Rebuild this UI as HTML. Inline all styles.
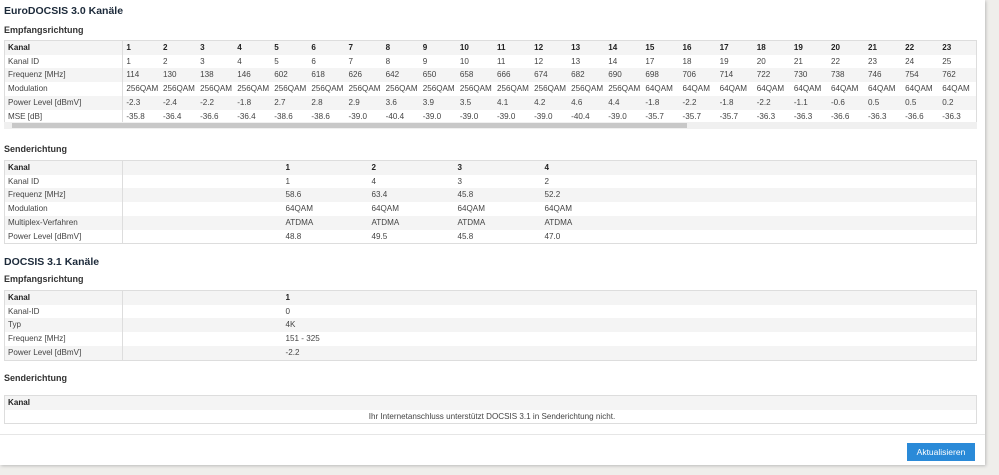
<!DOCTYPE html><html><head><style>
body{margin:0;width:999px;height:475px;background:#efeeeb;font-family:"Liberation Sans",sans-serif;overflow:hidden;position:relative}
.panel{position:absolute;left:0;top:0;width:985px;height:465px;background:#fff;box-shadow:1px 1px 3px #bbb}
h1{position:absolute;left:4px;top:5px;margin:0;font-size:10.5px;font-weight:bold;color:#1c2a3a}
h2{position:absolute;left:4px;margin:0;font-size:9px;font-weight:bold;color:#333}
table{position:absolute;left:4px;width:973px;border-collapse:collapse;border:1px solid #ddd;font-size:8.1px;color:#444;table-layout:fixed}
td{height:13.7px;padding:0 0 0 3px;white-space:nowrap;overflow:hidden;line-height:13.7px}
tr:nth-child(odd) td{background:#f4f4f4}
tr:first-child td{font-weight:bold;color:#222}
td.l{border-right:1px solid #ddd}
.sb{position:absolute;left:4px;top:122px;width:973px;height:7px;background:#f0f0f0}
.sb div{position:absolute;left:8px;top:1px;width:675px;height:5px;background:#c8c8c8}
.foot{position:absolute;left:0;top:434px;width:985px;border-top:1px solid #e6e6e6}
.btn{position:absolute;left:907px;top:443px;width:68px;height:18px;background:#2a8ad8;color:#fff;font-size:8.5px;text-align:center;line-height:18px}
</style></head><body><div class="panel">
<h1>EuroDOCSIS 3.0 Kanäle</h1>
<h2 style="top:25px">Empfangsrichtung</h2>
<table style="top:40px"><colgroup><col style="width:118px"><col span="23" style="width:37px"></colgroup>
<tr><td class="l">Kanal</td><td>1</td><td>2</td><td>3</td><td>4</td><td>5</td><td>6</td><td>7</td><td>8</td><td>9</td><td>10</td><td>11</td><td>12</td><td>13</td><td>14</td><td>15</td><td>16</td><td>17</td><td>18</td><td>19</td><td>20</td><td>21</td><td>22</td><td>23</td></tr>
<tr><td class="l">Kanal ID</td><td>1</td><td>2</td><td>3</td><td>4</td><td>5</td><td>6</td><td>7</td><td>8</td><td>9</td><td>10</td><td>11</td><td>12</td><td>13</td><td>14</td><td>17</td><td>18</td><td>19</td><td>20</td><td>21</td><td>22</td><td>23</td><td>24</td><td>25</td></tr>
<tr><td class="l">Frequenz [MHz]</td><td>114</td><td>130</td><td>138</td><td>146</td><td>602</td><td>618</td><td>626</td><td>642</td><td>650</td><td>658</td><td>666</td><td>674</td><td>682</td><td>690</td><td>698</td><td>706</td><td>714</td><td>722</td><td>730</td><td>738</td><td>746</td><td>754</td><td>762</td></tr>
<tr><td class="l">Modulation</td><td>256QAM</td><td>256QAM</td><td>256QAM</td><td>256QAM</td><td>256QAM</td><td>256QAM</td><td>256QAM</td><td>256QAM</td><td>256QAM</td><td>256QAM</td><td>256QAM</td><td>256QAM</td><td>256QAM</td><td>256QAM</td><td>64QAM</td><td>64QAM</td><td>64QAM</td><td>64QAM</td><td>64QAM</td><td>64QAM</td><td>64QAM</td><td>64QAM</td><td>64QAM</td></tr>
<tr><td class="l">Power Level [dBmV]</td><td>-2.3</td><td>-2.4</td><td>-2.2</td><td>-1.8</td><td>2.7</td><td>2.8</td><td>2.9</td><td>3.6</td><td>3.9</td><td>3.5</td><td>4.1</td><td>4.2</td><td>4.6</td><td>4.4</td><td>-1.8</td><td>-2.2</td><td>-1.8</td><td>-2.2</td><td>-1.1</td><td>-0.6</td><td>0.5</td><td>0.5</td><td>0.2</td></tr>
<tr><td class="l">MSE [dB]</td><td>-35.8</td><td>-36.4</td><td>-36.6</td><td>-36.4</td><td>-38.6</td><td>-38.6</td><td>-39.0</td><td>-40.4</td><td>-39.0</td><td>-39.0</td><td>-39.0</td><td>-39.0</td><td>-40.4</td><td>-39.0</td><td>-35.7</td><td>-35.7</td><td>-35.7</td><td>-36.3</td><td>-36.3</td><td>-36.6</td><td>-36.3</td><td>-36.6</td><td>-36.3</td></tr>
</table>
<div class="sb"><div></div></div>
<h2 style="top:144px">Senderichtung</h2>
<table style="top:160px"><colgroup><col style="width:118px"><col style="width:160px"><col style="width:86px"><col style="width:86px"><col style="width:87px"><col></colgroup>
<tr><td class="l">Kanal</td><td></td><td>1</td><td>2</td><td>3</td><td>4</td></tr>
<tr><td class="l">Kanal ID</td><td></td><td>1</td><td>4</td><td>3</td><td>2</td></tr>
<tr><td class="l">Frequenz [MHz]</td><td></td><td>58.6</td><td>63.4</td><td>45.8</td><td>52.2</td></tr>
<tr><td class="l">Modulation</td><td></td><td>64QAM</td><td>64QAM</td><td>64QAM</td><td>64QAM</td></tr>
<tr><td class="l">Multiplex-Verfahren</td><td></td><td>ATDMA</td><td>ATDMA</td><td>ATDMA</td><td>ATDMA</td></tr>
<tr><td class="l">Power Level [dBmV]</td><td></td><td>48.8</td><td>49.5</td><td>45.8</td><td>47.0</td></tr>
</table>
<h1 style="top:256px">DOCSIS 3.1 Kanäle</h1>
<h2 style="top:274px">Empfangsrichtung</h2>
<table style="top:290px"><colgroup><col style="width:118px"><col style="width:160px"><col></colgroup>
<tr><td class="l">Kanal</td><td></td><td>1</td></tr>
<tr><td class="l">Kanal-ID</td><td></td><td>0</td></tr>
<tr><td class="l">Typ</td><td></td><td>4K</td></tr>
<tr><td class="l">Frequenz [MHz]</td><td></td><td>151 - 325</td></tr>
<tr><td class="l">Power Level [dBmV]</td><td></td><td>-2.2</td></tr>
</table>
<h2 style="top:373px">Senderichtung</h2>
<table style="top:395px">
<tr><td>Kanal</td></tr>
<tr><td style="text-align:center">Ihr Internetanschluss unterstützt DOCSIS 3.1 in Senderichtung nicht.</td></tr>
</table>
<div class="foot"></div>
<div class="btn">Aktualisieren</div>
</div></body></html>
